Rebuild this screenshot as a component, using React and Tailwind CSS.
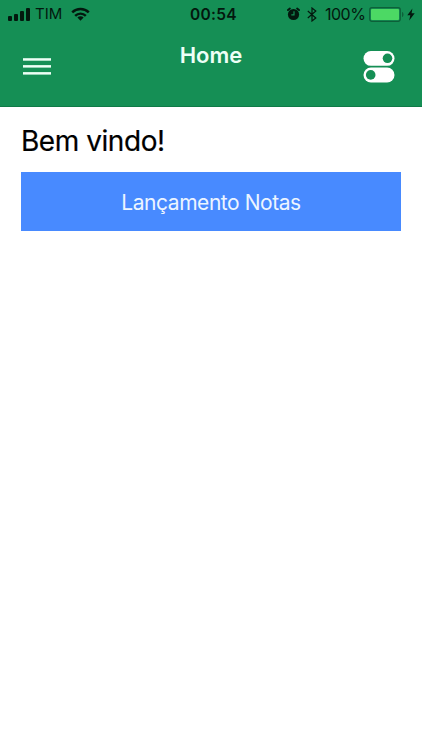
const SignalIcon = () => (
  <svg width="22" height="13" viewBox="0 0 22 13" fill="currentColor">
    <rect x="0" y="8" width="4" height="5" rx="1" />
    <rect x="6" y="6" width="4" height="7" rx="1" />
    <rect x="12" y="3" width="4" height="10" rx="1" />
    <rect x="18" y="0" width="4" height="13" rx="1" />
  </svg>
);

const WifiIcon = () => (
  <svg width="19" height="14" viewBox="0 0 20 14" fill="none" stroke="currentColor" strokeWidth="2.6">
    <path d="M1.3 5.4a12.4 12.4 0 0 1 17.4 0" />
    <path d="M4.4 8.9a8 8 0 0 1 11.2 0" />
    <path d="M10 14 6.7 10.8a4.6 4.6 0 0 1 6.6 0Z" fill="currentColor" stroke="none" />
  </svg>
);

const AlarmIcon = () => (
  <svg width="13" height="14" viewBox="0 0 13 14" fill="none" stroke="currentColor">
    <circle cx="6.5" cy="7.5" r="5.6" fill="currentColor" stroke="none" />
    <path d="M1 3.1 2.9 1.5M12 3.1 10.1 1.5" strokeWidth="1.9" strokeLinecap="round" />
    <path d="M7 4.3v3.5H4.3" stroke="#158f55" strokeWidth="1.2" />
  </svg>
);

const BluetoothIcon = () => (
  <svg width="10" height="15" viewBox="0 0 10 15" fill="none" stroke="currentColor" strokeWidth="1.2">
    <path d="m.8 4 8 7L5 14V1l3.8 3-8 7" />
  </svg>
);

const BatteryIcon = () => (
  <svg width="36" height="15" viewBox="0 0 36 15">
    <rect x=".7" y=".7" width="30.6" height="13.6" rx="2.2" fill="#158f55" stroke="#0d6039" strokeWidth="1.2" />
    <rect x="2" y="2" width="28" height="11" rx="1" fill="#4cd964" />
    <path d="M33 5c2 .6 2 4.4 0 5Z" fill="#0d6039" />
  </svg>
);

const BoltIcon = () => (
  <svg width="8" height="13" viewBox="0 0 8 13" fill="currentColor">
    <path d="M5.4.5.3 7.3h3L2.2 12.5 7.7 5.3H4.6Z" />
  </svg>
);

const MenuIcon = () => (
  <svg width="28" height="18" viewBox="0 0 28 18" fill="#edfff6">
    <rect y="0.2" width="28" height="2.5" />
    <rect y="7.1" width="28" height="2.5" />
    <rect y="14.1" width="28" height="2.5" />
  </svg>
);

const SwitchesIcon = () => (
  <svg width="32" height="32" viewBox="0 0 32 32" fill="#fff">
    <rect x=".5" y="0" width="31" height="14.8" rx="7.4" />
    <rect x=".5" y="16.6" width="31" height="14.8" rx="7.4" />
    <circle cx="24.5" cy="7.3" r="4.8" fill="#158f55" />
    <circle cx="7.7" cy="23.9" r="4.8" fill="#158f55" />
  </svg>
);

const StatusBar = () => (
  <div className="grid h-7 grid-cols-[1fr_auto_1fr] items-center pl-2 pr-[7px] text-[#03180e]">
    <div className="flex items-center">
      <SignalIcon />
      <span className="ml-[5px] w-[36px] text-[15px] leading-7">TIM</span>
      <WifiIcon />
    </div>
    <span className="ml-1 pt-0.5 text-[15.5px] font-semibold leading-6 tracking-[0.3px]">00:54</span>
    <div className="flex items-center justify-end">
      <AlarmIcon />
      <span className="ml-[7px]"><BluetoothIcon /></span>
      <span className="ml-2 w-[44px] text-[16px] leading-7 tracking-[-0.5px]">100%</span>
      <BatteryIcon />
      <span className="ml-0.5"><BoltIcon /></span>
    </div>
  </div>
);

const App = () => {
  return (
    <div className="min-h-screen bg-white font-[Inter,'Liberation_Sans',sans-serif]">
      <header className="h-[107px] border-b border-[#0f7a47] bg-[#158f55]">
        <StatusBar />
        <div className="grid grid-cols-[1fr_auto_1fr] items-start pl-[23px] pr-[27px]">
          <button aria-label="Menu" className="mt-[30px] justify-self-start"><MenuIcon /></button>
          <h1 className="ml-1 mt-[13px] text-[22px] font-semibold leading-7 text-[#edfff6]">Home</h1>
          <button aria-label="Alternar" className="mt-[23px] justify-self-end"><SwitchesIcon /></button>
        </div>
      </header>
      <main className="px-[21px] pt-4">
        <h2 className="text-[28px] font-normal leading-9 tracking-[-0.45px] text-black [-webkit-text-stroke:0.2px_black]">Bem vindo!</h2>
        <button className="mt-[13px] h-[59px] w-[380px] bg-[#488aff] pt-[3px] text-[21px] tracking-[-0.45px] text-[#edf5ff]">
          Lançamento Notas
        </button>
      </main>
    </div>
  );
};

export default App;
